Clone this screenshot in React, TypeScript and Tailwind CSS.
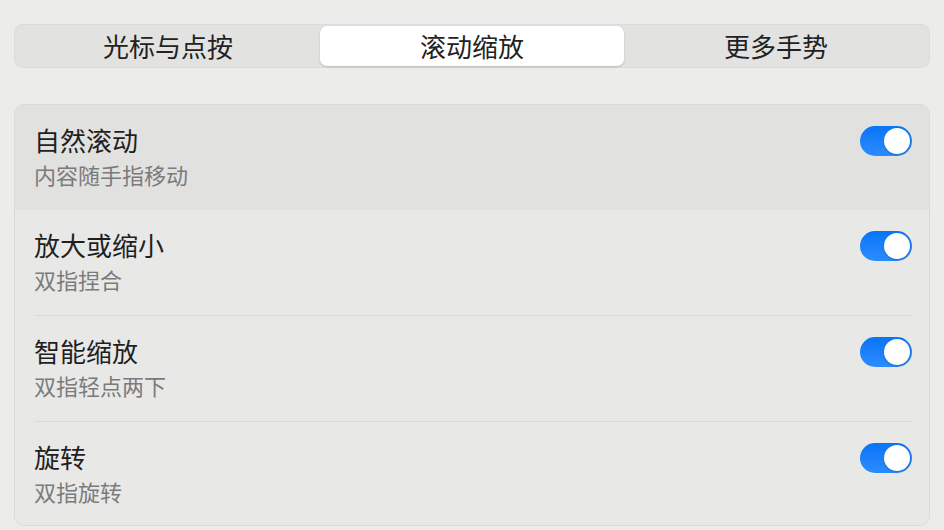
import { useState } from 'react';

const tabs = ['光标与点按', '滚动缩放', '更多手势'];

const rows = [
  { title: '自然滚动', desc: '内容随手指移动' },
  { title: '放大或缩小', desc: '双指捏合' },
  { title: '智能缩放', desc: '双指轻点两下' },
  { title: '旋转', desc: '双指旋转' },
];

function Toggle({ on, onChange }: { on: boolean; onChange: () => void }) {
  return (
    <button
      onClick={onChange}
      className={`mt-[2px] flex h-[30px] w-[52px] shrink-0 items-center rounded-full p-[2px] ${
        on ? 'justify-end bg-gradient-to-b from-[#0874f6] to-[#2a8cff]' : 'justify-start bg-[#d4d4d4]'
      }`}
    >
      <span className="h-[26px] w-[26px] rounded-full bg-white shadow-[0_1px_2px_rgba(0,0,0,0.25)]" />
    </button>
  );
}

export default function App() {
  const [active, setActive] = useState(1);
  const [values, setValues] = useState([true, true, true, true]);

  return (
    <div
      className="h-[530px] w-full overflow-hidden bg-[#ececeb] px-[14px] pt-[24px]"
      style={{ fontFamily: '"Noto Sans CJK SC", "Noto Sans", sans-serif' }}
    >
      <div className="grid h-[44px] grid-cols-3 rounded-[9px] border border-[#dbdbda] bg-[#e2e2e1] p-px">
        {tabs.map((tab, i) => (
          <button
            key={tab}
            onClick={() => setActive(i)}
            className={`flex items-center justify-center rounded-[7px] text-[26px] leading-none text-[#222] ${
              active === i ? 'bg-white shadow-[0_1px_2px_rgba(0,0,0,0.18)]' : ''
            }`}
          >
            {tab}
          </button>
        ))}
      </div>

      <div className="mt-[36px] overflow-hidden rounded-[10px] border border-[#dadad9] bg-[#e8e8e7]">
        {rows.map((row, i) => (
          <div key={row.title} className={i === 0 ? 'bg-[#e1e1e0]' : ''}>
            {i > 1 && <div className="ml-[19px] mr-[17px] h-px bg-[#dadad9]" />}
            <div
              className={`flex items-start justify-between pl-[19px] pr-[17px] pt-[19px] ${
                i === rows.length - 1 ? 'h-[103px]' : 'h-[105px]'
              }`}
            >
              <div className="flex flex-col gap-[3px]">
                <div className="text-[26px] leading-[32px] text-[#1f1f1f]">{row.title}</div>
                <div className="text-[22px] leading-[30px] text-[#7b7b7b]">{row.desc}</div>
              </div>
              <Toggle
                on={values[i]}
                onChange={() => setValues(values.map((v, j) => (j === i ? !v : v)))}
              />
            </div>
          </div>
        ))}
      </div>
    </div>
  );
}
